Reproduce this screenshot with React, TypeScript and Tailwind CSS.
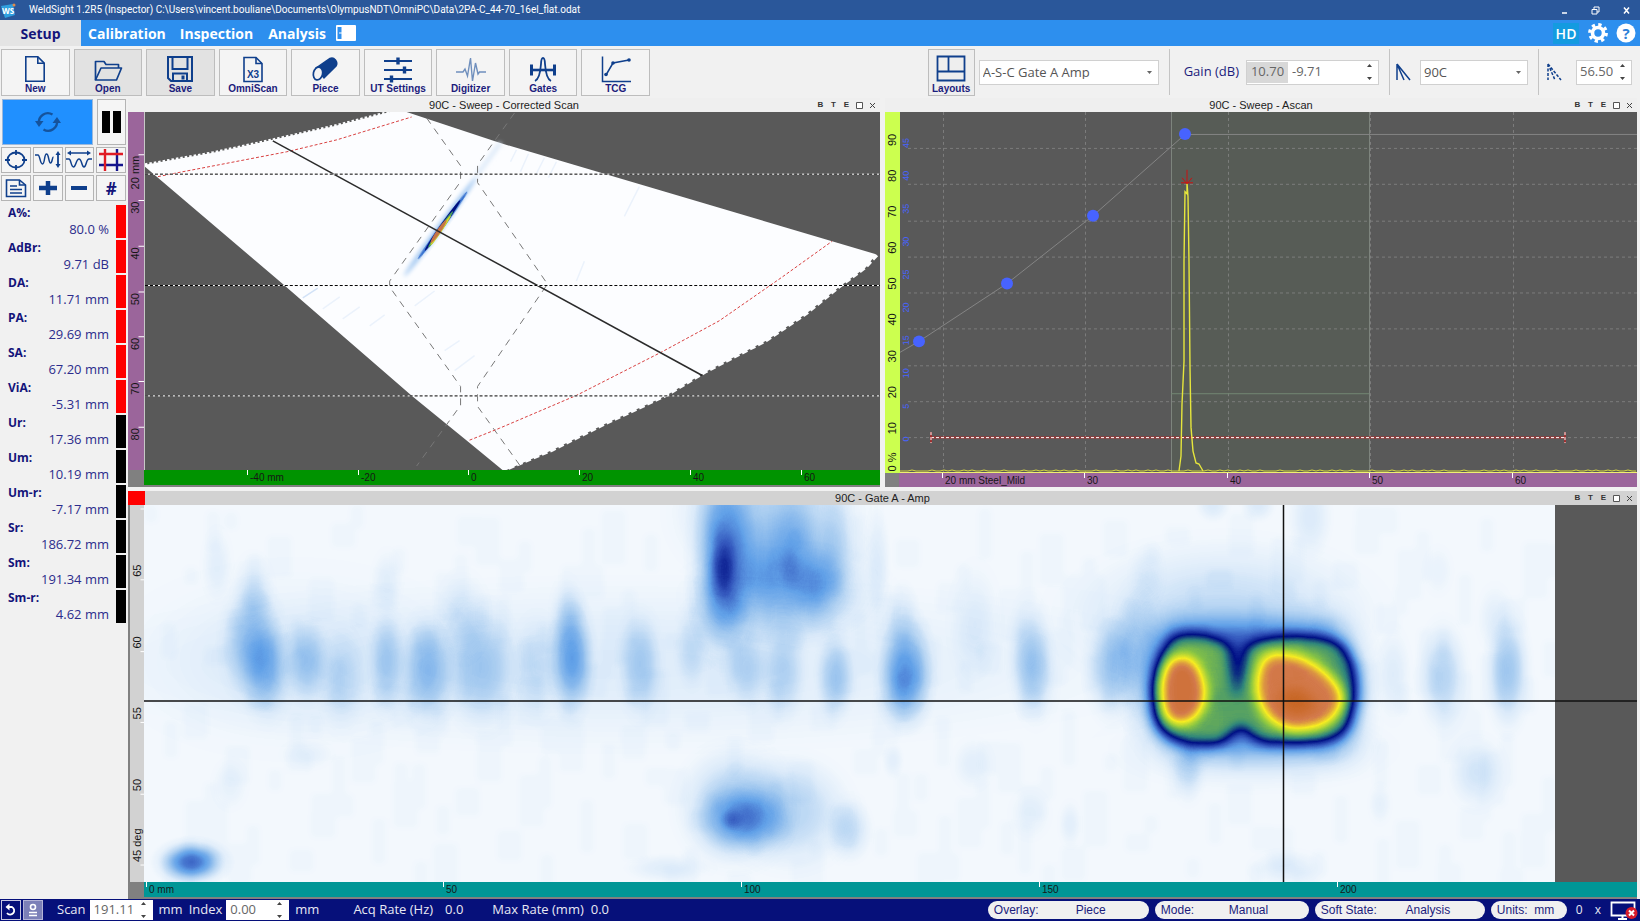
import type { ReactNode } from 'react';

interface Tick {
  at: number;
  label: string;
}

interface PanelProps {
  title: string;
  active?: boolean;
  children: ReactNode;
}

interface RulerProps {
  ticks: Tick[];
  length: number;
  className: string;
}

const NAVY = '#0f3f8c';

const tools = [
  { name: 'New', icon: <NewIcon /> },
  { name: 'Open', icon: <OpenIcon />, filled: true },
  { name: 'Save', icon: <SaveIcon />, filled: true },
  { name: 'OmniScan', icon: <OmniScanIcon /> },
  { name: 'Piece', icon: <PieceIcon /> },
  { name: 'UT Settings', icon: <SettingsIcon /> },
  { name: 'Digitizer', icon: <DigitizerIcon /> },
  { name: 'Gates', icon: <GatesIcon /> },
  { name: 'TCG', icon: <TcgIcon /> },
];

const readings = [
  { name: 'A%:', value: '80.0 %', alarm: true },
  { name: 'AdBr:', value: '9.71 dB', alarm: true },
  { name: 'DA:', value: '11.71 mm', alarm: true },
  { name: 'PA:', value: '29.69 mm', alarm: true },
  { name: 'SA:', value: '67.20 mm', alarm: true },
  { name: 'ViA:', value: '-5.31 mm', alarm: true },
  { name: 'Ur:', value: '17.36 mm', alarm: false },
  { name: 'Um:', value: '10.19 mm', alarm: false },
  { name: 'Um-r:', value: '-7.17 mm', alarm: false },
  { name: 'Sr:', value: '186.72 mm', alarm: false },
  { name: 'Sm:', value: '191.34 mm', alarm: false },
  { name: 'Sm-r:', value: '4.62 mm', alarm: false },
];

/* ---------- icons ---------- */

function NewIcon() {
  return (
    <svg width="32" height="28" viewBox="0 0 32 28" fill="none" stroke={NAVY} strokeWidth="1.6">
      <path d="M6.8 1.8h12l6.4 6.4v18H6.8z" />
      <path d="M18.8 1.8v6.4h6.4" />
    </svg>
  );
}

function OpenIcon() {
  return (
    <svg width="32" height="28" viewBox="0 0 32 28" fill="none" stroke={NAVY} strokeWidth="1.7" strokeLinejoin="round">
      <path d="M3.5 25V6.5H12l2 3h12.5V13" />
      <path d="M3.5 25 9 13h20.5L24.5 25z" />
    </svg>
  );
}

function SaveIcon() {
  return (
    <svg width="32" height="28" viewBox="0 0 32 28" fill="none" stroke={NAVY} strokeWidth="2">
      <path d="M4 2h24v24H7l-3-3z" />
      <path d="M8.5 2v12h15V2" />
      <path d="M9 26v-7.5h14V26" />
      <path d="M19 20.5v4" strokeWidth="3" />
    </svg>
  );
}

function OmniScanIcon() {
  return (
    <svg width="32" height="28" viewBox="0 0 32 28" fill="none" stroke={NAVY} strokeWidth="1.6">
      <path d="M7 2.5h12l6 6v18H7z" />
      <path d="M19 2.5v6h6" />
      <text x="16" y="23" fontSize="10" fontWeight="700" fill={NAVY} stroke="none" textAnchor="middle">
        X3
      </text>
    </svg>
  );
}

function PieceIcon() {
  return (
    <svg width="32" height="28" viewBox="0 0 32 28">
      <path d="M7 13 21 3.5c4-2 8.500 3.500 6 7.500L15 23z" fill={NAVY} stroke={NAVY} strokeWidth="1.5" />
      <ellipse cx="9" cy="18.5" rx="4.6" ry="6.5" fill="#f3f3f3" stroke={NAVY} strokeWidth="1.7" transform="rotate(12 9 18.5)" />
    </svg>
  );
}

function SettingsIcon() {
  return (
    <svg width="32" height="28" viewBox="0 0 32 28" stroke={NAVY} fill="none">
      <path d="M2 6h28M2 15h28M2 24h28" strokeWidth="1.8" />
      <path d="M16 2.5v7M22.5 11.5v7M9.5 20.5v7" strokeWidth="3.4" />
    </svg>
  );
}

function DigitizerIcon() {
  return (
    <svg width="32" height="28" viewBox="0 0 32 28" stroke="#6f8fbd" fill="none" strokeWidth="1.4">
      <path d="M1 17h7l2-3 2.500 7L15.500 3l2 23 3-18 2.500 11 1.500-2H31" />
    </svg>
  );
}

function GatesIcon() {
  return (
    <svg width="32" height="28" viewBox="0 0 32 28" stroke={NAVY} fill="none">
      <path d="M4 15h24" strokeWidth="2.6" />
      <path d="M4.5 9.5v11M27.5 9.5v11" strokeWidth="3" />
      <path d="M8 26c4.500-2 5.500-10 6-17 .3-8 3.700-8 4 0 .500 7 1.500 15 6 17" strokeWidth="1.8" />
    </svg>
  );
}

function TcgIcon() {
  return (
    <svg width="32" height="28" viewBox="0 0 32 28" stroke={NAVY} fill="none" strokeWidth="1.5">
      <path d="M2.5 1.5v25H31" />
      <path d="M6 20 13 8l16-3" />
      <g fill={NAVY} stroke="none">
        <circle cx="6" cy="19.5" r="1.8" />
        <circle cx="13" cy="8" r="1.8" />
        <circle cx="29" cy="5" r="1.8" />
      </g>
    </svg>
  );
}

function BeamIcon({ dashed }: { dashed?: boolean }) {
  return (
    <svg width="17" height="18" viewBox="0 0 17 18" stroke={NAVY} fill="none" strokeWidth="1.5" strokeDasharray={dashed ? '3 1.5' : undefined}>
      <path d="M2 1v16M2 1l7 16M2 1l13 16" />
    </svg>
  );
}

/* ---------- small controls ---------- */

function Arrows() {
  return (
    <svg width="7" height="18" viewBox="0 0 7 18" fill="#444" className="shrink-0">
      <path d="M1 4 3.5 1 6 4zM1 14 3.5 17 6 14z" />
    </svg>
  );
}

function DropDown({ label, value, className }: { label: string; value: string; className: string }) {
  return (
    <span className={`relative flex h-[25px] items-center border border-[#d0d0d0] bg-white ${className}`}>
      <select aria-label={label} className="h-full w-full appearance-none bg-transparent px-[3px] text-[13px] leading-none text-[#555] outline-none">
        <option>{value}</option>
      </select>
      <svg width="5" height="3" viewBox="0 0 5 3" fill="#666" className="pointer-events-none absolute right-[6px]">
        <path d="M0 0h5L2.500 3z" />
      </svg>
    </span>
  );
}

function SideButton({ label, children }: { label: string; children: ReactNode }) {
  return (
    <button type="button" aria-label={label} className="flex h-[26px] items-center justify-center border border-[#b4b4b4] bg-[#f5f5f5]">
      {children}
    </button>
  );
}

function StatusInput({ label, value }: { label: string; value: string }) {
  return (
    <label className="flex items-center gap-[4px]">
      {label}
      <span className="flex h-[20px] w-[63px] items-center bg-white pr-[6px]">
        <input type="text" defaultValue={value} className="w-full min-w-0 pl-[4px] text-[13px] text-[#666] outline-none" />
        <Arrows />
      </span>
    </label>
  );
}

function Pill({ name, value, className }: { name: string; value: string; className: string }) {
  return (
    <button type="button" className={`flex h-[18px] items-center rounded-full bg-[#f0f0f0] px-[6px] font-['Liberation_Sans',sans-serif] text-[12px] text-[#1c1c7c] ${className}`}>
      <span>{name}</span>
      <span className="flex-1 text-center">{value}</span>
    </button>
  );
}

/* ---------- rulers ---------- */

function HRuler({ ticks, length, className }: RulerProps) {
  return (
    <svg className={`h-full min-w-0 flex-1 font-['Liberation_Sans',sans-serif] text-[10px] ${className}`}>
      {ticks.map((tick) => (
        <svg key={tick.label} x={`${(tick.at / length) * 100}%`} className="overflow-visible">
          <path d="M.5 0v5" stroke="#fff" />
          <text x="3" y="11" fill="#161616">{tick.label}</text>
        </svg>
      ))}
    </svg>
  );
}

function VRuler({ ticks, length, className, marks = true, anchor, size }: RulerProps & { marks?: boolean; anchor: 'start' | 'middle' | 'end'; size: string }) {
  const shift = anchor === 'start' ? 3 : anchor === 'end' ? -1 : 0;
  return (
    <svg className={`min-h-0 shrink-0 self-stretch font-['Liberation_Sans',sans-serif] text-[11px] ${size} ${className}`}>
      {ticks.map((tick) => (
        <svg key={tick.label} y={`${(tick.at / length) * 100}%`} className="overflow-visible">
          {marks && <path d="M10.5 0h5.5" stroke="#fff" />}
          <text transform="rotate(-90)" x={shift} y="11" textAnchor={anchor} fill="#161616">
            {tick.label}
          </text>
        </svg>
      ))}
    </svg>
  );
}

function Panel({ title, active, children }: PanelProps) {
  return (
    <section className="flex min-h-0 min-w-0 flex-1 flex-col">
      <header className={`flex h-[14px] shrink-0 items-center ${active ? 'bg-[#d2d2d2]' : 'bg-[#efefef]'}`}>
        <span className={`h-full w-[17px] ${active ? 'bg-[#ff0000]' : ''}`} />
        <span className="w-[60px]" />
        <h2 className="flex-1 text-center font-['Liberation_Sans',sans-serif] text-[11px] leading-none text-[#222]">{title}</h2>
        <span className="flex w-[77px] items-center justify-end pr-px font-['Liberation_Sans',sans-serif] text-[8px] font-bold text-[#333]">
          <button type="button" className="w-[13px]">B</button>
          <button type="button" className="w-[13px]">T</button>
          <button type="button" className="w-[13px]">E</button>
          <button type="button" aria-label="Maximize" className="flex w-[13px] justify-center">
            <svg width="9" height="9" viewBox="0 0 9 9" fill="#fff" stroke="#555">
              <path d="M1.5 1.5h6v6h-6z" />
            </svg>
          </button>
          <button type="button" aria-label="Close" className="flex w-[13px] justify-center">
            <svg width="9" height="9" viewBox="0 0 9 9" stroke="#444">
              <path d="m2 2 5 5m0-5-5 5" />
            </svg>
          </button>
        </span>
      </header>
      {children}
    </section>
  );
}

/* ---------- sector scan ---------- */

function SectorScan() {
  const ticksX = [
    { at: 103, label: '-40 mm' },
    { at: 214, label: '-20' },
    { at: 324, label: '0' },
    { at: 435, label: '20' },
    { at: 546, label: '40' },
    { at: 657, label: '60' },
  ];
  const ticksY = [
    { at: 43, label: '20 mm' },
    { at: 89, label: '30' },
    { at: 135, label: '40' },
    { at: 181, label: '50' },
    { at: 226, label: '60' },
    { at: 271, label: '70' },
    { at: 317, label: '80' },
  ];
  const lowerArc = 'M733 144 722 156 695 176 662 203 622 230 562 261 522 285 462 313 408 340 360 360';
  const upperArc = 'M0 53 68 41 128 28 190 14 245 0';

  return (
    <>
      <div className="flex min-h-0 flex-1">
        <VRuler ticks={ticksY} length={360} anchor="end" size="w-[16px]" className="bg-[#9b659b]" />
        <svg viewBox="0 0 736 360" preserveAspectRatio="none" className="h-full min-w-0 flex-1 border-l border-[#c8c8c8] bg-[#595959]">
          <defs>
            <filter id="soft" x="-50%" y="-50%" width="200%" height="200%">
              <feGaussianBlur stdDeviation="2" />
            </filter>
            <filter id="fine" x="-50%" y="-50%" width="200%" height="200%">
              <feGaussianBlur stdDeviation=".6" />
            </filter>
          </defs>
          <path d="M0 53 68 41 128 28 190 14 245 0H262L355 31 732 143 722 156 695 176 662 203 622 230 562 261 522 285 462 313 408 340 362 360H358L323 331 268 286 138 173 0 55z" fill="#fcfdff" />
          <path d={upperArc} fill="none" stroke="#fcfdff" strokeWidth="3" strokeDasharray="2.5 2" />
          <path d={lowerArc} fill="none" stroke="#fcfdff" strokeWidth="3" strokeDasharray="6 3" />

          <g stroke="#a9c8f0" strokeWidth="1.5" opacity=".2" filter="url(#fine)">
            <path d="M178 198 195 186M198 208 215 196M225 215 240 204M270 195 290 180M310 260 330 245M300 240 315 230" />
            <path d="M372 38 366 50M384 42 376 60M400 46 392 62M412 50 404 66M495 75 480 105M440 150 432 170" />
          </g>
          <path d="M158 187 173 177" stroke="#a9c8f0" strokeWidth="1.5" opacity=".5" filter="url(#fine)" />

          {/* flaw echo */}
          <ellipse cx="296" cy="115" rx="62" ry="3" fill="#9cc4f0" transform="rotate(-54 296 115)" filter="url(#soft)" />
          <path d="M332 64 356 31" stroke="#dce9f8" strokeWidth="4" filter="url(#soft)" />
          <ellipse cx="298" cy="114" rx="42" ry="2.2" fill="#3a74d0" transform="rotate(-54 298 114)" filter="url(#fine)" />
          <ellipse cx="298" cy="114" rx="31" ry="2" fill="#001080" transform="rotate(-55 298 114)" />
          <ellipse cx="296" cy="118" rx="22" ry="1.8" fill="#4aa35c" transform="rotate(-56 296 118)" />
          <ellipse cx="296" cy="119" rx="18" ry="1.5" fill="#d8d828" transform="rotate(-56 296 119)" />
          <ellipse cx="294" cy="120" rx="14" ry="2" fill="#c47448" transform="rotate(-56 294 120)" />

          <g fill="none" stroke="#777" strokeDasharray="7 6">
            <path d="M282 6 316 54V70L245 170V176L316 276V295L272 356" />
            <path d="M370 1 333 53V71L403 173 333 276V296L378 359" />
          </g>
          <g fill="none" stroke="#d84040" strokeDasharray="3 2">
            <path d="M13 65 33 61 142 40 192 28 267 5" />
            <path d="M325 330 355 318 432 285 518 241 575 210 638 166 688 130" />
          </g>
          <path d="M128 29 558 265" stroke="#2b2b2b" strokeWidth="1.5" />
          <path d="M0 62.5h736M0 174.5h736M0 285.5h736" stroke="#fff" />
          <path d="M0 62.5h736M0 174.5h736M0 285.5h736" stroke="#000" strokeDasharray="3 2" />
        </svg>
      </div>
      <div className="flex h-[17px] shrink-0 border-b-2 border-[#808080] bg-[#808080]">
        <span className="w-[16px]" />
        <HRuler ticks={ticksX} length={736} className="bg-[#009300]" />
      </div>
    </>
  );
}

/* ---------- A-scan ---------- */

function AScan() {
  const ticksX = [
    { at: 43, label: '20 mm Steel_Mild' },
    { at: 185, label: '30' },
    { at: 328, label: '40' },
    { at: 470, label: '50' },
    { at: 613, label: '60' },
  ];
  const ticksY = [
    { at: 28, label: '90' },
    { at: 64, label: '80' },
    { at: 100, label: '70' },
    { at: 136, label: '60' },
    { at: 172, label: '50' },
    { at: 208, label: '40' },
    { at: 245, label: '30' },
    { at: 281, label: '20' },
    { at: 317, label: '10' },
    { at: 351, label: '0 %' },
  ];
  const points = [
    [19, 230],
    [107, 172],
    [193, 104],
    [285, 22],
  ];
  const decibels = [45, 40, 35, 30, 25, 20, 15, 10, 5, 0];
  const noise = Array.from({ length: 185 }, (_, i) => `${i * 4},${360 - ((i * 37) % 23 > 15 ? 1 : 0)}`).join(' ');

  return (
    <>
      <div className="flex min-h-0 flex-1">
        <VRuler ticks={ticksY} length={362} anchor="middle" size="w-[15px]" className="bg-[#ccff4f]" marks={false} />
        <svg viewBox="0 0 737 362" preserveAspectRatio="none" className="h-full min-w-0 flex-1 bg-[#595959]">
          <rect x="271" width="199" height="362" fill="#575c56" />
          <g stroke="#8c8c8c" strokeDasharray="3 3" opacity=".7">
            <path d="M43.5 0v362M185.5 0v362M328.5 0v362M470.5 0v362M613.5 0v362" />
            <path d="M8 36.5h729M8 72.5h729M8 109.5h729M8 145.5h729M8 181.5h729M8 217.5h729M8 254.5h729M8 290.5h729M8 326.5h729" />
          </g>
          <path d="M271.5 0v362M469.5 0v362" stroke="#7d857d" />
          <path d="M271 282.5h198" stroke="#728872" />
          <path d="M0 241 19 230 107 172 193 104 285 22.5H737" fill="none" stroke="#858585" />
          {decibels.map((db, i) => (
            <text key={db} transform={`translate(9 ${31 + i * 33}) rotate(-90)`} className="font-['Liberation_Sans',sans-serif] text-[9px]" fill="#4763ff" textAnchor="middle">
              {db}
            </text>
          ))}
          <path d="M31 326.5h634" stroke="#a03030" strokeWidth="2" />
          <path d="M31 326.5h634" stroke="#fff" strokeDasharray="3 2" />
          <path d="M31 321v11M665 321v11" stroke="#b02020" strokeWidth="1.5" />
          <path d="M31 321v11M665 321v11" stroke="#fff" strokeDasharray="3 2" />
          {points.map(([x, y]) => (
            <circle key={x} cx={x} cy={y} r="6" fill="#4763ff" />
          ))}
          <path d="M0 361.5h737" stroke="#f0f070" />
          <polyline points={noise} fill="none" stroke="#d8d840" />
          <path d="M279 360 281 345 282 293 284 250 284 150 285 80 287 82 287 71 288 85 289 150 290 256 291 316 293 340 296 352 299 353 303 360" fill="none" stroke="#e6e63c" strokeWidth="1.4" />
          <path d="M281 71h12M287 58v14M282 66l5 6 5-6" fill="none" stroke="#cc1010" />
        </svg>
      </div>
      <div className="flex h-[14px] shrink-0 bg-[#808080]">
        <span className="w-[14px]" />
        <HRuler ticks={ticksX} length={738} className="bg-[#9b659b]" />
      </div>
    </>
  );
}

/* ---------- C-scan ---------- */

// cx, cy, rx, ry, amplitude
const echoes = [
  [109, 139, 24, 46, 0.18], [123, 169, 19, 38, 0.12], [109, 86, 16, 28, 0.07], [163, 156, 17, 32, 0.13],
  [198, 176, 18, 40, 0.07], [243, 156, 14, 40, 0.12], [284, 166, 22, 44, 0.17], [338, 163, 28, 48, 0.14],
  [319, 112, 20, 34, 0.07], [393, 163, 20, 40, 0.07], [428, 153, 17, 46, 0.24], [423, 108, 13, 28, 0.06],
  [496, 159, 17, 42, 0.13], [48, 358, 27, 17, 0.35], [73, 60, 12, 28, 0.05], [163, 250, 20, 12, 0.04],
  [86, 280, 14, 20, 0.04], [243, 76, 12, 24, 0.05],
  [580, 50, 26, 78, 0.25], [579, 60, 12, 28, 0.17], [578, 104, 22, 34, 0.09], [645, 68, 62, 50, 0.19],
  [625, 8, 74, 60, 0.15], [646, 66, 10, 18, 0.06], [672, 78, 22, 28, 0.09], [619, 72, 18, 22, 0.05],
  [692, 36, 14, 50, 0.07], [650, 20, 18, 40, 0.05], [640, 92, 78, 38, 0.09],
  [548, 143, 14, 34, 0.08], [603, 163, 18, 34, 0.11], [639, 166, 18, 42, 0.11], [691, 173, 15, 36, 0.14],
  [761, 164, 22, 44, 0.24], [762, 188, 22, 34, 0.08], [734, 56, 10, 44, 0.06], [759, 112, 14, 30, 0.06],
  [831, 120, 20, 46, 0.06], [886, 150, 17, 44, 0.14], [892, 175, 17, 36, 0.07], [969, 163, 21, 42, 0.16],
  [993, 150, 20, 54, 0.1], [588, 316, 28, 28, 0.15], [587, 316, 9, 9, 0.08], [616, 316, 26, 26, 0.1],
  [645, 308, 50, 46, 0.14], [589, 302, 44, 48, 0.16], [706, 326, 18, 26, 0.1], [523, 364, 34, 12, 0.06],
  [829, 260, 16, 20, 0.05], [749, 256, 9, 16, 0.05], [886, 310, 16, 20, 0.04], [926, 320, 9, 18, 0.05],
  [1166, 12, 18, 34, 0.07], [1069, 0, 14, 14, 0.07], [1114, 0, 14, 14, 0.07], [1044, 268, 13, 24, 0.1],
  [1299, 172, 19, 42, 0.14], [1364, 166, 17, 46, 0.18], [1333, 268, 22, 28, 0.09], [1249, 170, 14, 36, 0.06],
  [1351, 114, 14, 26, 0.05], [1003, 70, 14, 26, 0.04], [1143, 364, 28, 14, 0.06], [1236, 300, 9, 16, 0.04],
  [1294, 66, 12, 20, 0.03], [150, 155, 130, 70, 0.05], [480, 160, 440, 70, 0.06], [1080, 110, 120, 60, 0.12],
  [1110, 245, 110, 34, 0.07],
];

// faint grain of the background
const grain = Array.from({ length: 260 }, (_, i) => ({
  x: (i * 397) % 1400,
  y: (i * 151 + ((i * 7) % 13) * 9) % 370,
  w: 14 + ((i * 11) % 22),
  h: 18 + ((i * 17) % 40),
}));

function CScan() {
  const ticksX = [
    { at: 2, label: '0 mm' },
    { at: 299, label: '50' },
    { at: 597, label: '100' },
    { at: 895, label: '150' },
    { at: 1193, label: '200' },
  ];
  const ticksY = [
    { at: 4, label: '' },
    { at: 75, label: '65' },
    { at: 147, label: '60' },
    { at: 218, label: '55' },
    { at: 290, label: '50' },
    { at: 361, label: '45 deg' },
  ];

  return (
    <>
      <div className="flex min-h-0 flex-1">
        <VRuler ticks={ticksY} length={378} anchor="start" size="w-[16px]" className="border-l-2 border-[#808080] bg-[#d2d2d2]" />
        <svg viewBox="0 0 1493 378" preserveAspectRatio="none" className="h-full min-w-0 flex-1 bg-[#595959]">
          <defs>
            <radialGradient id="echo">
              <stop offset="0" stopColor="#fff" />
              <stop offset=".2" stopColor="#fff" stopOpacity=".92" />
              <stop offset=".4" stopColor="#fff" stopOpacity=".7" />
              <stop offset=".6" stopColor="#fff" stopOpacity=".36" />
              <stop offset=".8" stopColor="#fff" stopOpacity=".1" />
              <stop offset="1" stopColor="#fff" stopOpacity="0" />
            </radialGradient>
            <filter id="palette" filterUnits="userSpaceOnUse" x="0" y="0" width="1411" height="378" colorInterpolationFilters="sRGB">
              <feColorMatrix values="0 0 0 1 0  0 0 0 1 0  0 0 0 1 0  0 0 0 0 1" />
              <feComponentTransfer>
                <feFuncR type="table" tableValues="1 .86 .64 .38 .2 0 .19 .55 .97 .83 .76" />
                <feFuncG type="table" tableValues="1 .92 .79 .63 .34 .06 .53 .78 .93 .48 .36" />
                <feFuncB type="table" tableValues="1 .98 .94 .91 .74 .52 .48 .26 .13 .3 .06" />
              </feComponentTransfer>
            </filter>
            <filter id="halo" filterUnits="userSpaceOnUse" x="900" y="0" width="420" height="378">
              <feGaussianBlur stdDeviation="15" />
            </filter>
            <filter id="body" filterUnits="userSpaceOnUse" x="900" y="0" width="420" height="378">
              <feGaussianBlur stdDeviation="7" />
            </filter>
            <filter id="grain" filterUnits="userSpaceOnUse" x="0" y="0" width="1411" height="378">
              <feGaussianBlur stdDeviation="3" />
            </filter>
          </defs>

          <g filter="url(#palette)">
            <rect width="1411" height="378" fill="#fff" opacity=".032" />
            <g filter="url(#grain)" fill="#fff" opacity=".014">
              {grain.map((g, i) => (
                <rect key={i} x={g.x} y={g.y} width={g.w} height={g.h} />
              ))}
            </g>
            {echoes.map(([cx, cy, rx, ry, amp], i) => (
              <ellipse key={i} cx={cx} cy={cy} rx={rx * 1.6} ry={ry * 1.6} fill="url(#echo)" opacity={amp} />
            ))}
            {/* two flaws: halo, body, hot cores */}
            <path d="M1016 120H1195L1214 170 1205 246H1030L1008 220 1004 170z" fill="#fff" opacity=".36" filter="url(#halo)" />
            <path d="M1030 132C1050 126 1076 134 1084 142L1092 196 1104 142C1130 126 1170 130 1198 138 1218 156 1220 198 1206 224 1190 242 1150 242 1118 238L1096 220 1078 240C1050 242 1022 242 1010 220 1002 190 1008 150 1030 132z" fill="#fff" opacity=".42" filter="url(#body)" />
            <path d="M1028 154C1046 146 1060 160 1062 190 1060 216 1036 228 1022 214 1014 196 1014 166 1028 154z" fill="#fff" opacity=".8" filter="url(#body)" />
            <path d="M1124 150C1150 144 1184 160 1200 190 1200 212 1182 226 1150 226 1124 222 1112 204 1112 180 1114 164 1116 156 1124 150z" fill="#fff" opacity=".74" filter="url(#body)" />
            <path d="M1136 186 1156 184 1176 202 1150 212 1138 204z" fill="#fff" opacity=".7" filter="url(#body)" />
          </g>
          <path d="M0 196.5H1493M1139.5 0V378" stroke="#111" strokeWidth="1.5" />
        </svg>
      </div>
      <div className="flex h-[17px] shrink-0 border-b-2 border-[#808080] bg-[#808080]">
        <span className="w-[16px]" />
        <HRuler ticks={ticksX} length={1493} className="bg-[#009696]" />
      </div>
    </>
  );
}

/* ---------- page sections ---------- */

function TitleBar() {
  return (
    <header className="flex h-[20px] shrink-0 items-center bg-[#2a579a] pr-[9px] text-white">
      <svg width="18" height="17" viewBox="0 0 18 17">
        <path d="M1 4 13 2l2 11-10 3z" fill="#2f9fe0" />
        <circle cx="14" cy="3" r="1.5" fill="#e08a4a" />
        <text x="2" y="12" fontSize="8" fontWeight="700" fill="#fff">WS</text>
      </svg>
      <h1 className="ml-[11px] flex-1 font-['Roboto',sans-serif] text-[10px] leading-none">
        WeldSight 1.2R5 (Inspector) C:\Users\vincent.bouliane\Documents\OlympusNDT\OmniPC\Data\2PA-C_44-70_16el_flat.odat
      </h1>
      <div className="flex items-center gap-[22px]">
        <button type="button" aria-label="Minimize">
          <svg width="9" height="9" viewBox="0 0 9 9" stroke="#fff" strokeWidth="1.5"><path d="M2 7h5" /></svg>
        </button>
        <button type="button" aria-label="Restore">
          <svg width="9" height="9" viewBox="0 0 9 9" stroke="#fff" fill="none"><path d="M3 3V1h5v5H6M1 3.5h5v4.5H1z" /></svg>
        </button>
        <button type="button" aria-label="Close">
          <svg width="9" height="9" viewBox="0 0 9 9" stroke="#fff" strokeWidth="1.5"><path d="m2 1.5 5 6m0-6-5 6" /></svg>
        </button>
      </div>
    </header>
  );
}

function TabBar() {
  return (
    <nav className="flex h-[26px] shrink-0 items-center bg-[#2d8fee] pr-[4px] text-[14px] font-bold text-white">
      <a href="#setup" className="flex h-full w-[81px] items-center justify-center bg-[#e4e4e4] text-[#14147a]">Setup</a>
      <a href="#calibration" className="ml-[7px]">Calibration</a>
      <a href="#inspection" className="ml-[14px]">Inspection</a>
      <a href="#analysis" className="ml-[15px]">Analysis</a>
      <button type="button" aria-label="Toggle panel" className="ml-[10px]">
        <svg width="20" height="16" viewBox="0 0 20 16">
          <rect width="20" height="16" rx="1" fill="#fff" />
          <path d="M1.5 2h4v12h-4z" fill="#2d8fee" />
          <path d="M3 8h3" stroke="#fff" />
        </svg>
      </button>
      <span className="ml-auto flex h-[21px] w-[26px] items-center justify-center bg-[#149be0] text-[14px] font-semibold">HD</span>
      <button type="button" aria-label="Settings" className="ml-[9px]">
        <svg width="20" height="20" viewBox="0 0 20 20" fill="none" stroke="#fff">
          <circle cx="10" cy="10" r="5.5" strokeWidth="3.6" />
          <circle cx="10" cy="10" r="8.3" strokeWidth="3.2" strokeDasharray="3.26 3.26" />
        </svg>
      </button>
      <button type="button" aria-label="Help" className="ml-[8px]">
        <svg width="20" height="20" viewBox="0 0 20 20">
          <circle cx="10" cy="10" r="9.5" fill="#fff" />
          <text x="10" y="15.5" fontSize="15" fontWeight="700" fill="#2d7fd8" textAnchor="middle">?</text>
        </svg>
      </button>
    </nav>
  );
}

function Toolbar() {
  return (
    <div className="flex h-[52px] shrink-0 items-center pl-px">
      <div className="grid h-[47px] w-[649px] grid-cols-9 gap-1">
        {tools.map((tool) => (
          <button
            key={tool.name}
            type="button"
            className={`flex flex-col items-center justify-end border border-[#bdbdbd] font-['Liberation_Sans',sans-serif] text-[10px] font-bold leading-[12px] text-[#1c1c7c] ${tool.filled ? 'bg-[#e2e2e2]' : 'bg-[#f4f4f4]'}`}
          >
            {tool.icon}
            {tool.name}
          </button>
        ))}
      </div>
      <div className="ml-auto flex items-center pr-[8px]">
        <button type="button" className="flex h-[47px] w-[47px] flex-col items-center justify-end border border-[#bdbdbd] bg-[#eee] font-['Liberation_Sans',sans-serif] text-[10px] font-bold leading-[12px] text-[#1c1c7c]">
          <svg width="30" height="28" viewBox="0 0 30 28" fill="none" stroke={NAVY} strokeWidth="1.8">
            <path d="M1.5 1.5h27v24h-27zM1.5 16.5h27M12.5 1.5v15" />
          </svg>
          Layouts
        </button>
        <DropDown label="Layout" value="A-S-C Gate A Amp" className="ml-[4px] w-[180px]" />
        <span className="ml-[10px] h-[46px] w-px bg-[#c4c4c4]" />
        <label className="ml-[14px] flex items-center gap-[7px] text-[13px] text-[#1c1c7c]">
          Gain (dB)
          <span className="flex h-[25px] w-[133px] items-center border border-[#d0d0d0] bg-white pr-[5px] text-[#666]">
            <span className="flex h-[21px] w-[41px] shrink-0 items-center justify-center bg-[#d8d8d8]">10.70</span>
            <input type="text" defaultValue="-9.71" className="w-full min-w-0 pl-[4px] outline-none" />
            <Arrows />
          </span>
        </label>
        <span className="ml-[10px] mr-[5px] h-[46px] w-px bg-[#c4c4c4]" />
        <BeamIcon />
        <DropDown label="Group" value="90C" className="ml-[8px] w-[108px]" />
        <span className="ml-[10px] mr-[7px] h-[46px] w-px bg-[#c4c4c4]" />
        <BeamIcon dashed />
        <span className="ml-[13px] flex h-[25px] w-[56px] items-center border border-[#d0d0d0] bg-white pr-[5px] text-[13px] text-[#666]">
          <input type="text" aria-label="Beam angle" defaultValue="56.50" className="w-full min-w-0 pl-[3px] outline-none" />
          <Arrows />
        </span>
      </div>
    </div>
  );
}

function Sidebar() {
  return (
    <aside className="flex w-[128px] shrink-0 flex-col pt-px">
      <div className="flex gap-[4px] pl-[2px]">
        <button type="button" aria-label="Refresh" className="flex h-[46px] w-[91px] items-center justify-center border border-[#9ab8dc] bg-[#2090ff]">
          <svg width="28" height="24" viewBox="0 0 28 24" fill="none" stroke="#15539c" strokeWidth="2.4">
            <path d="M5 13.500a9 9 0 0 1 13.500-9M23 10.500a9 9 0 0 1-13.500 9" />
            <path d="m1 11 4 6 4.500-6zM27 13l-4-6-4.500 6z" fill="#15539c" stroke="none" />
          </svg>
        </button>
        <button type="button" aria-label="Pause" className="flex h-[46px] w-[29px] items-center justify-center gap-[3px] border border-[#b4b4b4] bg-[#f5f5f5]">
          <span className="h-[22px] w-[8px] bg-black" />
          <span className="h-[22px] w-[8px] bg-black" />
        </button>
      </div>
      <div className="mt-[2px] grid grid-cols-4 gap-x-[2px] gap-y-[2px] pl-px pr-[2px]">
        <SideButton label="Center cursor">
          <svg width="24" height="20" viewBox="0 0 24 20" fill="none" stroke={NAVY} strokeWidth="1.8">
            <ellipse cx="12" cy="10" rx="8.5" ry="7.5" />
            <path d="M12 0v5M12 15v5M1 10h5M18 10h5" />
          </svg>
        </SideButton>
        <SideButton label="Vertical measure">
          <svg width="26" height="20" viewBox="0 0 26 20" fill="none" stroke={NAVY} strokeWidth="1.5">
            <path d="M0 5h3c2 0 2 9 4.500 9S9 4 11.500 4s2 9 4 9 1.500-6 3-6" />
            <path d="M23 3v12" strokeWidth="1.8" />
            <path d="m20.500 5 2.500-4 2.500 4zM20.500 14l2.500 4 2.500-4z" fill={NAVY} stroke="none" />
          </svg>
        </SideButton>
        <SideButton label="Horizontal measure">
          <svg width="26" height="20" viewBox="0 0 26 20" fill="none" stroke={NAVY} strokeWidth="1.5">
            <path d="M3 3h20" />
            <path d="M5 .5 1 3l4 2.500zM21 .5 25 3l-4 2.500z" fill={NAVY} stroke="none" />
            <path d="M0 9h3c2 0 2 8 4.500 8S10 9 13 9s2.500 8 5 8 2-8 5-8h3" />
          </svg>
        </SideButton>
        <SideButton label="Cursors">
          <svg width="26" height="22" viewBox="0 0 26 22" fill="none" strokeWidth="2.4">
            <path d="M19 0v22M1 16h24" stroke="#14148c" />
            <path d="M7 0v22M1 5h24" stroke="#e01c24" />
          </svg>
        </SideButton>
        <SideButton label="Report">
          <svg width="22" height="20" viewBox="0 0 22 20" fill="none" stroke={NAVY} strokeWidth="1.6">
            <path d="M1.5 2h13l6 5v11.5h-19z" />
            <path d="M14.5 2v5h6M5 8h7M5 11.5h12M5 15h12" />
          </svg>
        </SideButton>
        <SideButton label="Zoom in">
          <svg width="18" height="14" viewBox="0 0 18 14" stroke={NAVY} strokeWidth="4.5"><path d="M9 0v14M0 7h18" /></svg>
        </SideButton>
        <SideButton label="Zoom out">
          <svg width="16" height="14" viewBox="0 0 16 14" stroke={NAVY} strokeWidth="4"><path d="M0 7h16" /></svg>
        </SideButton>
        <SideButton label="Grid">
          <span className="text-[17px] font-bold leading-none text-[#14147a]">#</span>
        </SideButton>
      </div>
      <dl className="mt-[4px] flex flex-col gap-[2px] pl-[8px] pr-[2px]">
        {readings.map((r) => (
          <div key={r.name} className="flex h-[33px] gap-[7px]">
            <div className="flex-1">
              <dt className="text-[12px] font-bold leading-[16px] text-[#14147a]">{r.name}</dt>
              <dd className="text-right text-[13px] leading-[16px] text-[#2c2c8c]">{r.value}</dd>
            </div>
            <span className={`w-[10px] ${r.alarm ? 'bg-[#ff0000]' : 'bg-black'}`} />
          </div>
        ))}
      </dl>
    </aside>
  );
}

function StatusBar() {
  return (
    <footer className="flex h-[22px] shrink-0 items-center bg-[#06107a] pl-px pr-[2px] text-[13px] text-[#e8e8f4]">
      <button type="button" aria-label="Reset" className="flex h-[20px] w-[20px] items-center justify-center border border-[#c8c8e0]">
        <svg width="14" height="14" viewBox="0 0 14 14" fill="none" stroke="#fff" strokeWidth="1.8">
          <path d="M3 4h5a4 4 0 1 1-5 6" />
          <path d="m5.500.5-4 3.500 4 3.500z" fill="#fff" stroke="none" />
        </svg>
      </button>
      <button type="button" aria-label="Encoder" className="ml-[2px] flex h-[20px] w-[20px] items-center justify-center border border-[#b4b4d8] bg-[#7c80b8]">
        <svg width="10" height="14" viewBox="0 0 10 14" fill="none" stroke="#fff" strokeWidth="1.6">
          <circle cx="5" cy="4" r="2.5" />
          <path d="M1 9.5h8M1 12.5h8" />
        </svg>
      </button>
      <div className="ml-[14px] flex items-center gap-[6px]">
        <StatusInput label="Scan" value="191.11" />
        <span>mm</span>
        <StatusInput label="Index" value="0.00" />
        <span>mm</span>
      </div>
      <span className="ml-[34px]">Acq Rate (Hz)</span>
      <span className="ml-[12px]">0.0</span>
      <span className="ml-[29px]">Max Rate (mm)</span>
      <span className="ml-[7px]">0.0</span>
      <div className="ml-auto flex items-center gap-[6px]">
        <Pill name="Overlay:" value="Piece" className="w-[161px]" />
        <Pill name="Mode:" value="Manual" className="w-[154px]" />
        <Pill name="Soft State:" value="Analysis" className="w-[170px]" />
        <Pill name="Units:" value="mm" className="w-[76px]" />
      </div>
      <span className="ml-[9px] text-[12px]">0</span>
      <span className="ml-[12px] text-[12px]">x</span>
      <svg width="28" height="20" viewBox="0 0 28 20" className="ml-[9px]">
        <path d="M1.5 2.5h23v13h-23z" fill="none" stroke="#fff" strokeWidth="1.8" />
        <path d="M8 19h9M12.5 15v4" stroke="#fff" strokeWidth="2" />
        <circle cx="21.5" cy="13" r="6" fill="#d81c2c" />
        <path d="m19 10.5 5 5m0-5-5 5" stroke="#fff" strokeWidth="2" />
      </svg>
    </footer>
  );
}

export default function App() {
  return (
    <div className="flex h-screen flex-col overflow-hidden bg-[#f1f1f1] font-['Open_Sans','Noto_Sans',sans-serif]">
      <TitleBar />
      <TabBar />
      <Toolbar />
      <div className="flex min-h-0 flex-1">
        <Sidebar />
        <main className="flex min-w-0 flex-1 flex-col gap-[4px] pr-[3px]">
          <div className="flex min-h-0 flex-[389] gap-[5px]">
            <Panel title="90C - Sweep - Corrected Scan">
              <SectorScan />
            </Panel>
            <Panel title="90C - Sweep - Ascan">
              <AScan />
            </Panel>
          </div>
          <div className="flex min-h-0 flex-[408]">
            <Panel title="90C - Gate A - Amp" active>
              <CScan />
            </Panel>
          </div>
        </main>
      </div>
      <StatusBar />
    </div>
  );
}
